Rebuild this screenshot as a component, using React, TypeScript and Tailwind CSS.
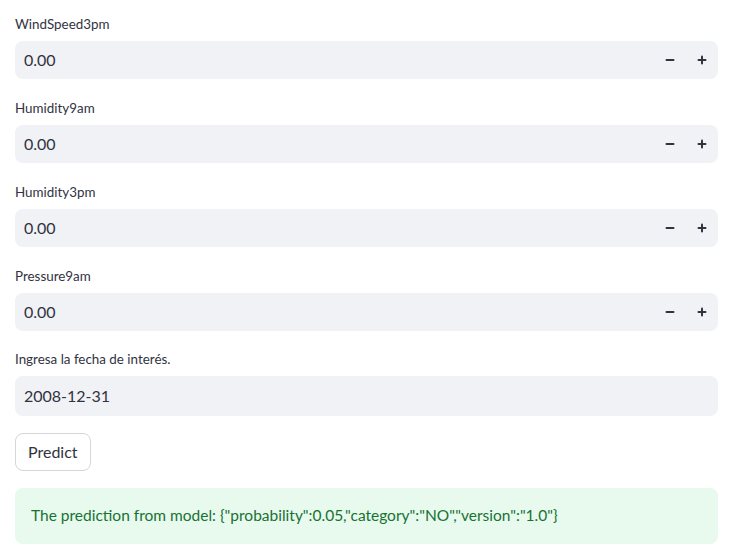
import { Minus, Plus } from 'lucide-react';

const FIELDS = ['WindSpeed3pm', 'Humidity9am', 'Humidity3pm', 'Pressure9am'];

function Label({ text }: { text: string }) {
  return <div className="h-[21px] leading-[21px] text-[13.4px] text-[#31333f] mb-[6px]">{text}</div>;
}

function NumberField({ label }: { label: string }) {
  return (
    <div>
      <Label text={label} />
      <div className="h-[38px] bg-[#f0f2f6] rounded-lg flex items-center">
        <span className="flex-1 pl-[9px] text-base text-[#31333f]">0.00</span>
        <button className="w-8 h-full flex items-center justify-center text-[#31333f]">
          <Minus size={12} strokeWidth={4} />
        </button>
        <button className="w-8 h-full flex items-center justify-center text-[#31333f]">
          <Plus size={12} strokeWidth={4} />
        </button>
      </div>
    </div>
  );
}

export default function App() {
  return (
    <div
      className="w-[730px] h-[548px] bg-white pl-[15px] pr-[12px] pt-[14px] flex flex-col gap-[19px]"
      style={{ fontFamily: 'Lato, "Noto Sans", sans-serif' }}
    >
      {FIELDS.map((f) => (
        <NumberField key={f} label={f} />
      ))}
      <div className="-mt-[1px]">
        <Label text="Ingresa la fecha de interés." />
        <div className="h-10 bg-[#f0f2f6] rounded-lg flex items-center pl-[9px] text-base text-[#31333f]">
          2008-12-31
        </div>
      </div>
      <div className="-mt-[2px]">
        <button className="h-[38px] px-3 border border-[#d6d6d9] rounded-lg bg-white text-base text-[#31333f]">
          Predict
        </button>
      </div>
      <div className="-mt-[2px] h-14 rounded-lg bg-[#e8f9ee] flex items-center px-4 text-[15.5px] text-[#177233]">
        The prediction from model: {'{"probability":0.05,"category":"NO","version":"1.0"}'}
      </div>
    </div>
  );
}
